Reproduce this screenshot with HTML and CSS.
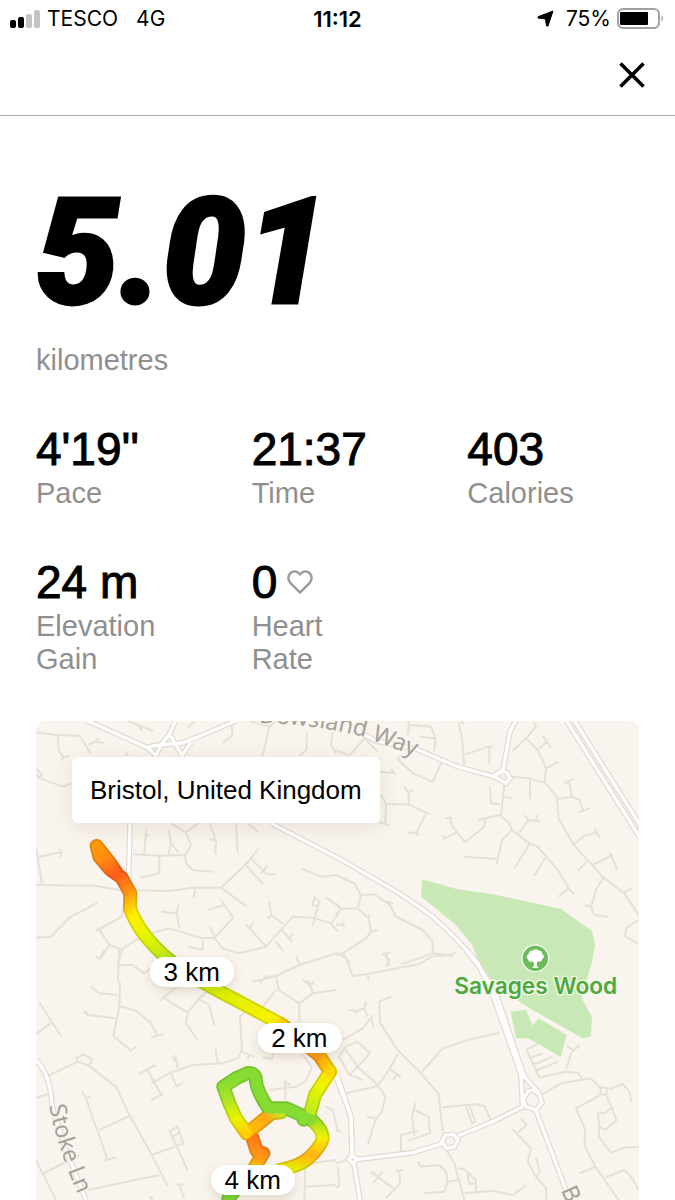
FILE: index.html
```
<!DOCTYPE html>
<html lang="en">
<head>
    <meta charset="UTF-8">
    <meta name="viewport" content="width=device-width, initial-scale=1.0">
    <title>Run Summary</title>
    <link rel="stylesheet" href="styles.css">
</head>
<body>
    <div class="status-bar">
        <div class="status-left">
            <svg class="signal" viewBox="0 0 30 18" aria-hidden="true">
                <rect x="0" y="10" width="6" height="8" rx="2"/>
                <rect x="8" y="7" width="6" height="11" rx="2"/>
                <rect x="16" y="4" width="6" height="14" rx="2" fill="#c4c4c4"/>
                <rect x="24" y="0" width="6" height="18" rx="2" fill="#c4c4c4"/>
            </svg>
            <span class="carrier">TESCO</span>
            <span>4G</span>
        </div>
        <div class="status-time">11:12</div>
        <div class="status-right">
            <svg class="arrow" viewBox="0 0 17 17" aria-hidden="true">
                <path d="M16 1 L11 16 L9.500 16 L8.500 9 L1 8 L1 6.800 Z" stroke="#000" stroke-width="1" stroke-linejoin="round"/>
            </svg>
            <span>75%</span>
            <svg class="battery" viewBox="0 0 48 21" aria-hidden="true">
                <rect x="1" y="1" width="41" height="19" rx="5" fill="none" stroke="#a0a0a0" stroke-width="2"/>
                <rect x="3" y="4" width="28" height="13" rx="1"/>
                <path d="M44.500 7 Q47.500 10.500 44.500 14 Z" fill="#a0a0a0"/>
            </svg>
        </div>
    </div>
    <header class="nav-bar">
        <button class="close" type="button" aria-label="Close">
            <svg viewBox="0 0 26 26" aria-hidden="true">
                <path d="M1.500 1.500 L24.500 24.500 M24.500 1.500 L1.500 24.500" stroke="#000" stroke-width="3.600"/>
            </svg>
        </button>
    </header>
    <main class="summary">
        <h1 class="distance">5.01</h1>
        <p class="label">kilometres</p>
        <div class="stats">
            <div class="stat">
                <div class="value">4'19''</div>
                <div class="label">Pace</div>
            </div>
            <div class="stat">
                <div class="value">21:37</div>
                <div class="label">Time</div>
            </div>
            <div class="stat">
                <div class="value">403</div>
                <div class="label">Calories</div>
            </div>
            <div class="stat">
                <div class="value">24 m</div>
                <div class="label">Elevation Gain</div>
            </div>
            <div class="stat">
                <div class="value">0
                    <svg class="heart" viewBox="0 0 26 24" aria-hidden="true">
                        <path d="M13 22.500 L3.300 12.800 C.7 10 .8 5.800 3.200 3.300 C5.700 .9 9.500 .9 12 3.300 L13 4.300 L14 3.300 C16.500 .9 20.300 .9 22.800 3.300 C25.200 5.800 25.300 10 22.700 12.800 Z" fill="none" stroke="#999" stroke-width="2.400"/>
                    </svg>
                </div>
                <div class="label">Heart Rate</div>
            </div>
        </div>
        <div class="map">
            <svg class="map-canvas" viewBox="0 18 1809 1437" preserveAspectRatio="xMidYMin slice" role="img" aria-label="Route map">
                <defs>
                    <linearGradient id="start" gradientUnits="userSpaceOnUse" x1="180" y1="390" x2="400" y2="735">
                        <stop offset="0" stop-color="#ff9a0a"/>
                        <stop offset=".12" stop-color="#ff8a10"/>
                        <stop offset=".26" stop-color="#ff5a18"/>
                        <stop offset=".42" stop-color="#ff9412"/>
                        <stop offset=".58" stop-color="#fff000"/>
                        <stop offset=".76" stop-color="#e6f400"/>
                        <stop offset="1" stop-color="#b4e61e"/>
                    </linearGradient>
                    <linearGradient id="middle" gradientUnits="userSpaceOnUse" x1="400" y1="735" x2="885" y2="1070">
                        <stop offset="0" stop-color="#b4e61e"/>
                        <stop offset=".3" stop-color="#d8f000"/>
                        <stop offset=".6" stop-color="#faf000"/>
                        <stop offset=".72" stop-color="#ffb010"/>
                        <stop offset=".9" stop-color="#ff9a14"/>
                        <stop offset="1" stop-color="#ffdc00"/>
                    </linearGradient>
                    <linearGradient id="down" gradientUnits="userSpaceOnUse" x1="882" y1="1070" x2="822" y2="1200">
                        <stop offset="0" stop-color="#ffe400"/>
                        <stop offset=".4" stop-color="#eaf400"/>
                        <stop offset="1" stop-color="#b8ea20"/>
                    </linearGradient>
                    <linearGradient id="loop" gradientUnits="userSpaceOnUse" x1="600" y1="1090" x2="632" y2="1255">
                        <stop offset="0" stop-color="#86dc32"/>
                        <stop offset=".3" stop-color="#a6e428"/>
                        <stop offset=".7" stop-color="#e8f200"/>
                        <stop offset="1" stop-color="#ffd000"/>
                    </linearGradient>
                    <linearGradient id="right" gradientUnits="userSpaceOnUse" x1="820" y1="1200" x2="790" y2="1365">
                        <stop offset="0" stop-color="#8ade30"/>
                        <stop offset=".35" stop-color="#f4f000"/>
                        <stop offset=".7" stop-color="#ffb414"/>
                        <stop offset="1" stop-color="#e6ee00"/>
                    </linearGradient>
                    <linearGradient id="branch" gradientUnits="userSpaceOnUse" x1="632" y1="1255" x2="735" y2="1190">
                        <stop offset="0" stop-color="#ffc400"/>
                        <stop offset=".6" stop-color="#ffa818"/>
                        <stop offset="1" stop-color="#c8e81e"/>
                    </linearGradient>
                    <linearGradient id="tail" gradientUnits="userSpaceOnUse" x1="650" y1="1265" x2="590" y2="1440">
                        <stop offset="0" stop-color="#ff7a1a"/>
                        <stop offset=".3" stop-color="#ff9a14"/>
                        <stop offset=".5" stop-color="#ffd000"/>
                        <stop offset="1" stop-color="#78d834"/>
                    </linearGradient>
                    <filter id="pill-shadow" x="-30%" y="-40%" width="160%" height="220%">
                        <feDropShadow dx="0" dy="10" stdDeviation="14" flood-color="#6b5a3c" flood-opacity=".2"/>
                    </filter>
                    <path id="dowsland" d="M668 24 Q830 26 985 66 L1160 134"/>
                    <path id="stoke" d="M40 1172 Q62 1300 140 1470"/>

                    <!-- north west -->
                    <g id="major-nw">
                        <path d="M155 18 L335 98 L360 122 M335 98 L352 92 L375 90 L400 58 L418 18 M375 90 L360 122 M352 92 L440 84 L600 18 M400 58 L418 86 L438 122 M465 82 L438 122 M282 325 L278 480 M705 325 L905 428"/>
                    </g>
                    <!-- north east -->
                    <g id="major-ne">
                        <path d="M70 50 L120 78 L240 102 L365 155 L470 184 L500 170 L512 105 L522 50 L540 15 M470 184 L485 190 L510 205 L522 190 L512 172 L495 168 Z M0 425 L190 535 Q250 575 290 605 Q370 675 430 750"/>
                        <path d="M692 18 L910 365 M716 18 L915 335"/>
                    </g>
                    <g id="major-sw">
                        <path d="M0 330 Q45 375 48 470 L90 600 L150 750 M905 380 L945 500 L948 610"/>
                    </g>
                    <g id="major-se">
                        <path d="M390 0 L430 50 L470 135 L555 375 L560 470 M430 50 L480 130 L565 380 L610 430 M560 470 L470 515 L365 558 M320 580 L230 608 L65 628 M0 380 L45 500 L48 615 M54 640 L72 750 M600 482 L690 720"/>
                        <path d="M575 425 L562 450 L570 470 L600 480 L618 458 L610 432 L590 420 Z M328 555 L318 575 L332 595 L355 590 L366 570 L352 553 Z M48 616 L38 628 L50 640 L64 628 Z"/>
                    </g>
                </defs>

                <rect y="18" width="1809" height="1437" fill="#f9f4ed"/>

                <!-- Savages Wood -->
                <g fill="#c8e8b6">
                    <path d="M1158 493 L1262 522 L1370 538 L1575 582 L1668 648 L1677 690 L1668 740 L1636 848 L1668 906 L1664 965 L1640 970 L1490 885 L1380 815 L1335 750 L1305 685 L1260 630 L1156 545 Z"/>
                    <path d="M1424 890 L1470 884 L1490 932 L1508 910 L1592 960 L1575 1026 L1476 970 L1440 970 Z"/>
                </g>

                <!-- small streets -->
                <g class="street">
                    <path d="M0 52 L60 60 L130 62 L165 115 M65 60 L68 105 L82 128 L102 122 M82 128 L75 138 M158 88 L178 80 L205 84 M178 80 L190 68 M0 180 L15 190 L80 215 L105 205 M0 160 L18 180 L5 192 M0 400 L18 505 M8 425 L75 412 L72 402 M75 412 L74 428 M0 510 L175 512 L250 525 L400 528 L470 518 L555 518 L632 575 M555 518 L630 448 L668 400 M625 445 L682 508 M645 430 L692 478 L720 478 M675 475 L695 452 M478 522 L472 550"/>
                    <path d="M275 18 L352 48 M300 25 L320 48 M455 40 L475 18 M560 85 L590 60 L585 18 M640 18 L700 35 L680 122 M700 35 L720 18 M790 122 L812 105 L812 50 M890 50 L885 90 L900 115 M268 112 L275 122"/>
                    <path d="M330 342 L325 418 M330 362 L340 360 M290 418 L370 422 L448 420 M370 422 L370 475 L312 488 M398 345 L405 385 L398 418 M405 385 L428 412 M405 325 L450 352 L465 390 L448 420 L450 445 L470 465 L530 470 M450 352 L490 322 M522 325 L540 378 L538 418 M540 378 L522 372 M600 325 L605 415 M635 325 L665 350 M798 462 L855 485 L900 480"/>
                    <path d="M0 668 L45 665 L100 608 L185 563 M180 648 L258 605 L265 560 M190 645 L220 690 L192 732 M220 690 L260 705 L245 745 M260 700 L325 660 L400 640 L500 670 L535 668 L592 608 L565 570 L515 585 M565 570 L555 555 M378 590 L422 595 L430 640 M422 595 L428 570 M522 635 L535 665 M500 670 L500 705 L455 695 M535 668 L560 700 L610 715 L690 695 L770 605 L830 608 L885 625 L905 600 M630 628 L690 695 M640 640 L652 622 M738 645 L768 680 M760 672 L770 655 M700 560 L705 600 L740 625 M695 612 L705 600 M830 632 L850 560 L835 545 L830 570 L845 575 M870 548 L905 572 M720 680 L742 710 M885 625 L905 650"/>
                </g>
                <g class="street" transform="translate(900 0)">
                    <path d="M0 105 L40 122 L85 70 L125 110 M130 170 L175 175 M165 162 L178 178 M182 130 L230 175 L290 200 L315 145 M185 135 L195 120 M215 60 L220 30 L285 35 L298 70 L295 108 M250 65 L298 70 M220 30 L215 18 M368 22 L378 70 L385 150 M388 118 L460 95 L460 145 M385 28 L375 20 M450 95 L472 95 M530 108 L570 70 L600 35 L592 20 M570 70 L605 105 L630 160 L668 140 M605 105 L632 80 M620 62 L645 98 M630 160 L625 205 M528 185 L580 190 L630 205 L662 245 L668 310 L712 388 L800 485 L865 535 L908 600 M582 195 L582 252 M505 210 L495 300 M500 245 L530 250 M462 215 L465 265 L492 268 M665 252 L708 245 L698 195 M685 205 L712 192 M708 245 L730 255 L742 288 M728 292 L760 280 M715 388 L745 362 L785 352 M775 340 L792 368 M770 450 L830 420 M820 412 L845 465 M725 468 L752 440 M802 488 L780 525 L765 575 L775 600 L815 605 M748 570 L765 575 M865 532 L888 520 M908 615 L870 640 L868 665 L905 685"/>
                    <path d="M125 238 L140 245 L150 268 L148 325 M130 322 L158 330 M150 268 L218 268 L282 298 M218 268 L218 232 M205 215 L218 235 L228 225 M270 295 L240 355 L215 352 M240 350 L248 362 M328 310 L348 308 M340 305 L350 335 L388 382 L445 335 L448 310 M360 352 L320 375 M320 360 L328 372 M425 315 L490 300 L520 325 L528 345 L580 385 L605 395 L665 465 L698 520 L668 545 M698 520 L715 538 M528 345 L498 375 L482 448 M385 425 L482 432 M580 388 L535 460 M628 428 L595 482 M548 355 L578 315 L612 318 M565 300 L580 320 M605 300 L598 318"/>
                    <path d="M0 480 L55 505 L75 540 L65 580 L15 582 L0 600 M15 582 L0 565 M25 495 L35 488 M75 540 L115 538 L162 570 L180 605 L260 645 L290 680 L290 715 M150 560 L172 565 M65 580 L98 610 L105 650 L90 670 L20 715 L40 745 M105 650 L125 645 M98 610 L100 598 M0 628 L25 632 L20 622 M0 720 L20 715 M290 715 L195 748 M290 715 L345 722 L358 712 M138 718 L165 712 M150 715 L160 750"/>
                </g>
                <g class="street" transform="translate(0 705)">
                    <path d="M10 158 L75 258 M0 252 L45 220 M0 445 L35 432 M35 378 L125 335 M120 325 L142 312 L168 328 L160 348 L125 335 Z M160 348 L240 410 L280 495 L345 610 L395 710 M138 425 L150 445 L215 630 M202 632 L242 622 M150 445 L165 438 M190 540 L280 498 M20 672 L130 615 M155 720 L370 675 M0 630 L60 750 M250 0 L248 45 L290 45 L325 70 L345 55 M248 45 L245 90 L252 100 L250 170 L232 258 L285 302 L300 290 M165 110 L190 130 L245 135 M142 185 L155 195 L240 205 M155 195 L148 182 M250 168 L300 182 L345 220 L365 258 M345 262 L382 252 M370 152 L430 105 M385 145 L455 188 L490 145 L530 110 M455 188 L450 220 L485 270 M490 148 L520 165 L535 228 M180 20 L192 28 L205 0"/>
                    <path d="M308 372 L358 345 M335 360 L378 438 M345 450 L382 432 M345 400 L400 370 L470 345 L560 340 L605 325 L618 300 L612 200 L630 180 M405 372 L422 408 L442 398 M418 315 L425 355 M408 320 L420 335 M538 295 L545 340 M615 305 L655 320 M640 312 L635 328 M400 540 L455 662 M348 615 L442 580 L425 530 L398 545 M410 560 L430 548 M430 705 L445 745 M422 705 L442 702 M340 738 L350 750 M650 95 L720 78 L790 45 L900 10 M720 78 L728 120 L790 160 L830 130 L900 120 M790 160 L790 220 M720 120 L680 170 M670 100 L690 80 L720 78 M800 90 L822 105 L835 95 M815 90 L830 125 M780 15 L790 42 M690 325 L708 325 L712 308 M680 322 L710 328 M700 420 L780 410 L808 395 L828 350 L800 315 M748 388 L748 450 M765 405 L742 395 M870 470 L890 480 L905 540 M820 640 L900 630 M808 650 L805 750 M810 710 L900 705"/>
                </g>
                <g class="street" transform="translate(900 705)">
                    <path d="M0 8 L30 25 L50 78 L95 72 L250 42 L290 18 L350 15 M95 72 L98 90 M150 50 L160 30 L140 10 M38 178 L60 185 L85 175 L90 155 M60 190 L65 180 M85 175 L95 200 M20 270 L80 235 L112 195 M105 200 L112 230 M5 325 L30 290 L65 275 L102 310 L65 350 L30 300 M65 350 L40 375 L10 320 M40 375 L80 388 M65 350 L125 405 L148 440 L138 485 L120 505 L95 585 M92 500 L118 505 M30 430 L125 408 L162 355 L185 312 M160 355 L195 382 M172 390 L185 372 M165 140 L130 155 L132 218 L185 300 L255 370 L308 432 L320 545 M258 365 L320 295 L395 270 L490 248 M320 472 L425 462 M390 468 L408 520 L418 515 L400 465 M425 465 L445 468 L465 512 M238 458 L228 500 L235 558 M235 480 L278 500 L282 550 L215 572 M195 605 L195 555 L245 542 M0 540 L15 545"/>
                    <path d="M570 300 L605 282 M572 300 L610 382 L690 365 L725 368 L738 385 M578 325 L620 310 M590 345 L650 320 M600 362 L665 335 M690 358 L705 310 L730 285 M692 288 L712 300 M620 432 L675 400 L765 385 L795 415 M795 412 L815 415 L810 435 L793 432 Z M820 418 L860 402 L880 425 L886 455 M793 435 L720 475 L748 540 L745 585 L778 650 L848 750 M812 438 L842 510 L808 540 L790 530 L785 490 L808 488 L830 470 M790 530 L788 560 L825 608 L865 592 L910 592 M730 670 L778 650 M808 682 L865 660 L885 680 L908 720 M530 538 L585 595 L575 635 L600 680 L612 665 L600 625 M545 548 L572 525 L555 505 M600 680 L630 715 L632 750 M330 598 L355 640 L385 750 M245 635 L255 650 L310 645 L330 665 L335 695 L325 725 L265 730 M335 695 L368 690 M365 655 L385 658 L420 690 L420 725 M395 670 L400 702 L418 700 M385 730 L470 722 L530 735 L572 705 M105 665 L178 720 M110 700 L140 665 M178 662 L202 660 M190 665 L192 700 L150 745 M0 640 L35 628 M5 650 L10 705 L0 715"/>
                </g>

                <!-- main roads: grey casing with white on top -->
                <g class="casing">
                    <use href="#major-nw"/>
                    <use href="#major-ne" x="900"/>
                    <use href="#major-sw" y="705"/>
                    <use href="#major-se" x="900" y="705"/>
                </g>
                <g class="road">
                    <use href="#major-nw"/>
                    <use href="#major-ne" x="900"/>
                    <use href="#major-sw" y="705"/>
                    <use href="#major-se" x="900" y="705"/>
                </g>

                <g class="road-name">
                    <text><textPath href="#dowsland">Dowsland Way</textPath></text>
                    <text><textPath href="#stoke">Stoke Ln</textPath></text>
                    <text transform="translate(1574 1425) rotate(66)">B</text>
                </g>

                <!-- wood marker -->
                <circle cx="1498" cy="730" r="40" fill="#6cbb59" stroke="#eef8e8" stroke-width="4"/>
                <path d="M1494 748 L1491 739 C1484 743 1476 740 1476 733 C1470 729 1471 720 1478 717 C1478 710 1484 706 1489 707 C1494 701 1504 701 1508 707 C1515 706 1519 711 1518 716 C1525 719 1525 729 1519 732 C1519 739 1511 743 1505 738 L1502 748 L1503 754 L1510 758 L1487 758 L1493 754 Z" fill="#fff"/>
                <text class="wood-name" x="1499" y="836" text-anchor="middle">Savages Wood</text>

                <!-- recorded route -->
                <g class="route">
                    <g id="route-lines">
                        <path d="M647 1262 L662 1308 L682 1315 L655 1358 L577 1450" stroke="url(#tail)"/>
                        <path d="M632 1255 L707 1195 L735 1192" stroke="url(#branch)"/>
                        <path d="M827 1215 Q862 1245 860 1270 Q855 1295 817 1330 Q790 1353 732 1365" stroke="url(#right)"/>
                        <path d="M882 1070 L837 1140 L822 1195" stroke="url(#down)"/>
                        <path d="M182 393 L190 425 L222 463 L257 488 L283 535 L282 580 Q310 660 400 735 M182 393 L216 436 L240 470" stroke="url(#start)"/>
                        <path d="M400 735 Q470 790 600 855 L740 930 L850 1022 L882 1070" stroke="url(#middle)"/>
                        <path d="M632 1255 L600 1210 L580 1165 L562 1115 L600 1090" stroke="url(#loop)"/>
                        <path d="M600 1090 L635 1074 Q655 1072 659 1090 Q660 1125 697 1180 L752 1180 L802 1203 L827 1215 M800 1205 L803 1214" stroke="#86dc32"/>
                    </g>
                </g>
                <use class="route-core" href="#route-lines"/>

                <g class="pill">
                    <rect x="342" y="726" width="252" height="90" rx="45"/>
                    <rect x="665" y="924" width="252" height="90" rx="45"/>
                    <rect x="525" y="1350" width="252" height="90" rx="45"/>
                </g>
                <g class="km" text-anchor="middle">
                    <text x="467" y="799">3 km</text>
                    <text x="790" y="996">2 km</text>
                    <text x="650" y="1423">4 km</text>
                </g>
            </svg>
            <div class="place">Bristol, United Kingdom</div>
        </div>
    </main>
</body>
</html>
```
FILE: styles.css
```
* {
    box-sizing: border-box;
}
body {
    margin: 0;
    background-color: #fff;
    color: #000;
    font-family: "Liberation Sans", Arial, sans-serif;
}
svg {
    display: block;
}

/* status bar */
.status-bar {
    display: grid;
    grid-template-columns: 1fr auto 1fr;
    align-items: center;
    height: 37px;
    padding: 0 10px;
    font-family: Inter, sans-serif;
    font-size: 21px;
}
.status-left,
.status-right {
    display: flex;
    align-items: center;
}
.status-right {
    justify-content: flex-end;
    gap: 6px;
}
.signal {
    width: 30px;
    height: 18px;
    margin-right: 7px;
}
.carrier {
    margin-right: 18px;
}
.status-time {
    font-size: 22px;
    font-weight: 600;
}
.arrow {
    width: 17px;
    height: 17px;
    margin-right: 6px;
}
.battery {
    width: 48px;
    height: 21px;
}

.nav-bar {
    display: flex;
    justify-content: flex-end;
    align-items: center;
    height: 79px;
    padding: 0 20px 3px;
    border-bottom: 1px solid #adadad;
}
.close {
    padding: 10px;
    border: 0;
    background: none;
    cursor: pointer;
}
.close svg {
    width: 26px;
    height: 26px;
}

/* run numbers */
.summary {
    padding: 62px 36px 0;
}
.distance {
    margin: 0;
    font-family: Roboto, sans-serif;
    font-size: 148px;
    font-style: italic;
    font-weight: 900;
    line-height: 150px;
    -webkit-text-stroke: 3px #000;
}
.label {
    max-width: 134px;
    margin: 0;
    color: #8f8f8f;
    font-size: 29px;
    line-height: 33px;
}
.distance + .label {
    margin-top: 16px;
}
.stats {
    display: grid;
    grid-template-columns: repeat(3, 1fr);
    gap: 46px 44px;
    margin: 46px 0 45px;
}
.value {
    display: flex;
    align-items: center;
    gap: 10px;
    margin-bottom: 2px;
    font-size: 46px;
    line-height: 52px;
    -webkit-text-stroke: 1px #000;
}
.heart {
    width: 26px;
    height: 24px;
}

/* map */
.map {
    position: relative;
    overflow: hidden;
    border-radius: 9px 9px 0 0;
}
.map-canvas {
    width: 100%;
}
.place {
    position: absolute;
    top: 36px;
    left: 36px;
    padding: 18px;
    border-radius: 6px;
    background-color: #fff;
    box-shadow: 0 4px 20px rgba(107, 90, 60, 0.12);
    font-size: 26px;
    line-height: 30px;
}
.street {
    fill: none;
    stroke: #e5e0d8;
    stroke-width: 6;
    stroke-linejoin: round;
}
.casing {
    fill: none;
    stroke: #dedad3;
    stroke-width: 17;
}
.road {
    fill: none;
    stroke: #fff;
    stroke-width: 10;
}
.road-name {
    fill: #a5a19b;
    stroke: #f9f4ed;
    stroke-width: 6px;
    paint-order: stroke;
    font-family: "Noto Sans", sans-serif;
    font-size: 70px;
}
.wood-name {
    fill: #4fa83d;
    stroke: #f3f9ec;
    stroke-width: 8px;
    paint-order: stroke;
    font-family: Inter, sans-serif;
    font-size: 68px;
    font-weight: 600;
}
.route {
    fill: none;
    stroke-width: 42;
    stroke-linecap: round;
    stroke-linejoin: round;
    filter: brightness(0.88);
}
.route-core {
    fill: none;
    stroke-width: 31;
    stroke-linecap: round;
    stroke-linejoin: round;
}
.pill {
    fill: #fff;
    filter: url(#pill-shadow);
}
.km {
    font-size: 78px;
}
```
